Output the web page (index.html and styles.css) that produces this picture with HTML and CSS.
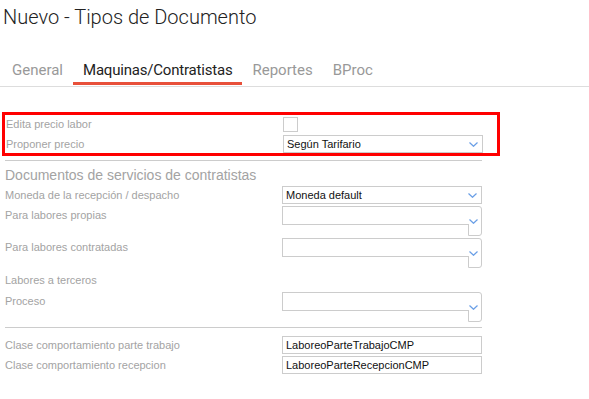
FILE: index.html
```html
<!DOCTYPE html>
<html lang="es">
  <head>
    <meta charset="UTF-8" />
    <title>Nuevo - Tipos de Documento</title>
    <link rel="stylesheet" href="styles.css">
  </head>
  <body>
    <h1 class="page-title">Nuevo - Tipos de Documento</h1>

    <nav class="tabs">
      <a class="tab">General</a>
      <a class="tab active">Maquinas/Contratistas</a>
      <a class="tab">Reportes</a>
      <a class="tab">BProc</a>
    </nav>

    <div class="form">
      <div class="highlight">
        <div class="field">
          <label>Edita precio labor</label>
          <span class="check"></span>
        </div>
        <div class="field">
          <label>Proponer precio</label>
          <div class="pick">
            <span class="pick-value">Según Tarifario</span>
            <svg class="chev" width="9" height="5" viewBox="0 0 9 5"><polyline points="0.5,0.5 4.5,4.3 8.5,0.5" /></svg>
          </div>
        </div>
      </div>

      <hr class="sep" />

      <h2 class="section-title">Documentos de servicios de contratistas</h2>

      <div class="field">
        <label>Moneda de la recepción / despacho</label>
        <div class="pick">
          <span class="pick-value">Moneda default</span>
          <svg class="chev" width="9" height="5" viewBox="0 0 9 5"><polyline points="0.5,0.5 4.5,4.3 8.5,0.5" /></svg>
        </div>
      </div>

      <div class="field">
        <label>Para labores propias</label>
        <div class="pick-empty">
          <span class="pick-box"></span>
          <span class="pick-arrow">
            <svg class="chev" width="9" height="5" viewBox="0 0 9 5"><polyline points="0.5,0.5 4.5,4.3 8.5,0.5" /></svg>
          </span>
        </div>
      </div>

      <div class="field">
        <label>Para labores contratadas</label>
        <div class="pick-empty">
          <span class="pick-box"></span>
          <span class="pick-arrow">
            <svg class="chev" width="9" height="5" viewBox="0 0 9 5"><polyline points="0.5,0.5 4.5,4.3 8.5,0.5" /></svg>
          </span>
        </div>
      </div>

      <div class="field field-plain">
        <label>Labores a terceros</label>
      </div>

      <div class="field">
        <label>Proceso</label>
        <div class="pick-empty">
          <span class="pick-box"></span>
          <span class="pick-arrow">
            <svg class="chev" width="9" height="5" viewBox="0 0 9 5"><polyline points="0.5,0.5 4.5,4.3 8.5,0.5" /></svg>
          </span>
        </div>
      </div>

      <hr class="sep sep-low" />

      <div class="field">
        <label>Clase comportamiento parte trabajo</label>
        <input class="text" type="text" value="LaboreoParteTrabajoCMP" />
      </div>
      <div class="field">
        <label>Clase comportamiento recepcion</label>
        <input class="text" type="text" value="LaboreoParteRecepcionCMP" />
      </div>
    </div>
  </body>
</html>
```

FILE: styles.css
```css
body {
  margin: 0;
  background: #fff;
  font-family: "Liberation Sans", Arial, sans-serif;
  color: #222;
}

.page-title {
  margin: 0;
  padding: 4px 0 0 3px;
  font-family: Roboto, "Liberation Sans", sans-serif;
  font-weight: 300;
  font-size: 20px;
  line-height: 26px;
  color: #222;
}

.tabs {
  display: flex;
  margin-top: 31px;
  padding-left: 2px;
  padding-bottom: 1px;
  border-bottom: 1px solid #ddd;
}

.tab {
  font-family: Roboto, "Liberation Sans", sans-serif;
  font-size: 15px;
  line-height: 18px;
  color: #999;
  padding: 0 10px 3px;
  border-bottom: 3px solid transparent;
}

.tab.active {
  letter-spacing: -0.2px;
  color: #222;
  border-bottom-color: #e8503a;
}

.form {
  width: 477px;
  margin-left: 5px;
  padding-top: 25px;
}

.highlight {
  width: 491px;
  margin-left: -3px;
  padding-left: 1px;
  border: 3px solid #ff0000;
  display: flex;
  flex-direction: column;
  gap: 2px;
}

.field {
  display: grid;
  grid-template-columns: 277px 200px;
  align-items: start;
  margin-bottom: 2px;
}

.highlight .field {
  margin-bottom: 0;
  align-items: center;
}

.field label {
  font-size: 11px;
  line-height: 18px;
  color: #a3a3a3;
}

.field-plain {
  height: 20px;
  align-items: center;
}

.check {
  width: 13px;
  height: 13px;
  border: 1px solid #ccc;
  display: block;
}

.pick {
  box-sizing: border-box;
  height: 18px;
  border: 1px solid #ccc;
  display: flex;
  align-items: center;
  justify-content: space-between;
  padding: 0 4px 0 3px;
  font-size: 11px;
  color: #111;
}

.chev {
  display: block;
}

.chev polyline {
  fill: none;
  stroke: #6a9fe6;
  stroke-width: 1.2;
}

.pick-empty {
  display: flex;
  align-items: flex-start;
  height: 30px;
}

.pick-box {
  box-sizing: border-box;
  width: 187px;
  height: 19px;
  border: 1px solid #ccc;
  border-right: none;
  margin-right: -1px;
  background: #fff;
  position: relative;
  z-index: 1;
}

.pick-arrow {
  box-sizing: border-box;
  width: 14px;
  height: 30px;
  border: 1px solid #ccc;
  border-radius: 0 3px 3px 0;
  display: flex;
  justify-content: flex-end;
  padding: 12px 3px 0 0;
}

.sep {
  margin: 4px 0 0;
  border: none;
  border-top: 1px solid #ccc;
  height: 0;
}

.sep-low {
  margin: 5px 0 8px;
}

.section-title {
  margin: 6px 0 3px;
  font-size: 14px;
  font-weight: normal;
  line-height: 16px;
  color: #a3a3a3;
}

.text {
  box-sizing: border-box;
  width: 200px;
  height: 18px;
  margin: 0;
  border: 1px solid #ccc;
  padding: 0 3px;
  font-family: "Liberation Sans", Arial, sans-serif;
  font-size: 11px;
  color: #111;
  outline: none;
}
```
